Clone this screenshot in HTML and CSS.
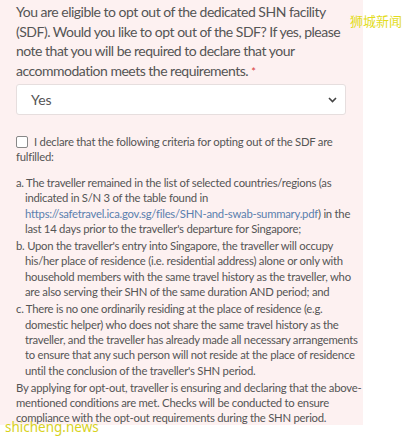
FILE: index.html
```html
<!DOCTYPE html>
<html lang="en">
<head>
    <title>SHN opt-out</title>
    <meta charset="UTF-8">
    <link rel="stylesheet" href="styles.css">
</head>
<body>
    <section class="panel">
        <p class="question">You are eligible to opt out of the dedicated SHN facility (SDF). Would you like to opt out of the SDF? If yes, please note that you will be required to declare that your accommodation meets the requirements. <span class="req">*</span></p>

        <div class="select">
            <span>Yes</span>
            <svg class="chevron" width="9" height="6" viewBox="0 0 9 6"><path d="M1 1l3.5 3.5L8 1" fill="none" stroke="#444" stroke-width="1.6"/></svg>
        </div>

        <label class="declare"><span class="box"></span>I declare that the following criteria for opting out of the SDF are<br>fulfilled:</label>

        <ol class="criteria">
            <li>a. The traveller remained in the list of selected countries/regions (as<br>indicated in S/N 3 of the table found in<br><a href="#">https://safetravel.ica.gov.sg/files/SHN-and-swab-summary.pdf</a>) in the<br>last 14 days prior to the traveller's departure for Singapore;</li>
            <li>b. Upon the traveller's entry into Singapore, the traveller will occupy<br>his/her place of residence (i.e. residential address) alone or only with<br>household members with the same travel history as the traveller, who<br>are also serving their SHN of the same duration AND period; and</li>
            <li>c. There is no one ordinarily residing at the place of residence (e.g.<br>domestic helper) who does not share the same travel history as the<br>traveller, and the traveller has already made all necessary arrangements<br>to ensure that any such person will not reside at the place of residence<br>until the conclusion of the traveller's SHN period.</li>
        </ol>

        <p class="note">By applying for opt-out, traveller is ensuring and declaring that the above-<br>mentioned conditions are met. Checks will be conducted to ensure<br>compliance with the opt-out requirements during the SHN period.</p>
    </section>

    <div class="wm-top">狮城新闻</div>
    <div class="wm-bottom">shicheng.news</div>
</body>
</html>
```

FILE: styles.css
```css
* {
    box-sizing: border-box;
}

body {
    margin: 0;
    background: #fff;
    font-family: Lato, 'Open Sans', sans-serif;
    color: #555;
}

.panel {
    width: 363px;
    height: 425px;
    padding: 2px 2px 0 16px;
    background: #fdf1f1;
}

.question {
    margin: 0;
    font-size: 14px;
    letter-spacing: -0.5px;
    line-height: 19.5px;
}

.req {
    color: #d9403a;
    font-size: 11px;
}

.select {
    display: flex;
    align-items: center;
    justify-content: space-between;
    width: 330px;
    height: 31px;
    margin-top: 3px;
    padding: 0 8px 0 14px;
    background: #fff;
    border: 1px solid #e6dede;
    border-radius: 3px;
    font-size: 14px;
    color: #555;
}

.declare {
    display: block;
    margin-top: 19px;
    font-size: 11.3px;
    letter-spacing: -0.25px;
    line-height: 15px;
    white-space: nowrap;
}

.box {
    display: inline-block;
    width: 12px;
    height: 12px;
    margin-right: 6px;
    vertical-align: -2px;
    background: #fff;
    border: 1px solid #888;
    border-radius: 2px;
}

.criteria {
    list-style: none;
    margin: 11px 0 0;
    padding: 0;
    font-size: 11.3px;
    letter-spacing: -0.25px;
    line-height: 15.3px;
    white-space: nowrap;
}

.criteria li {
    margin-bottom: 2px;
    padding-left: 9px;
    text-indent: -9px;
}

.criteria a {
    color: #5a7fae;
    text-decoration: none;
}

.note {
    margin: 0;
    font-size: 11.3px;
    letter-spacing: -0.25px;
    line-height: 15.3px;
    white-space: nowrap;
}

.wm-top {
    position: absolute;
    top: 11px;
    left: 350px;
    font-family: 'Noto Sans CJK SC', sans-serif;
    font-size: 13px;
    color: #e3dc1c;
}

.wm-bottom {
    position: absolute;
    top: 418px;
    left: 5px;
    font-family: 'Noto Sans', sans-serif;
    font-size: 13.5px;
    color: #d8d21e;
}
```
